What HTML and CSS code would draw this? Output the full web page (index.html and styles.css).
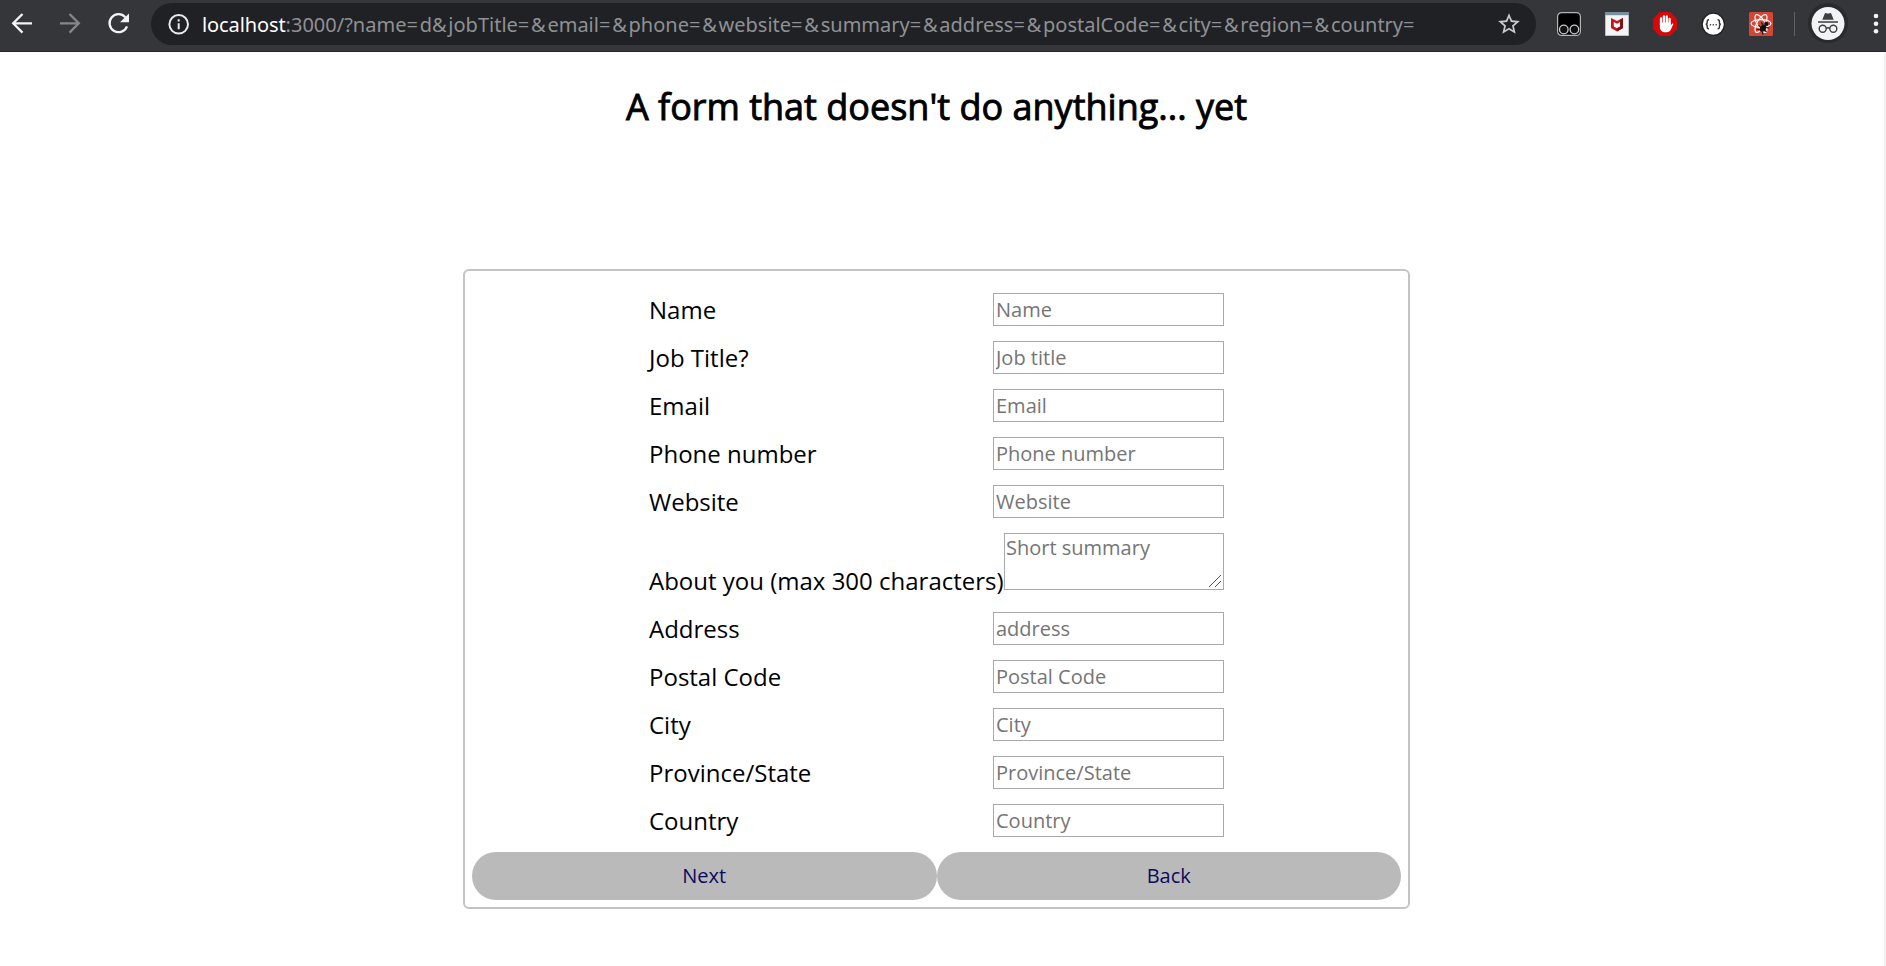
FILE: index.html
```html
<!DOCTYPE html>
<html lang="en">
<head>
<meta charset="utf-8">
<title>Form</title>
<link rel="stylesheet" href="styles.css">
</head>
<body>
<header class="toolbar">
  <svg class="nav" width="148" height="48" viewBox="0 0 148 48" fill="none" stroke="#f1f3f4" stroke-width="2.3">
    <path d="M32 23.3H13.5M22.5 14L13.2 23.3l9.3 9.3"/>
    <path stroke="#85878a" d="M60 23.3H78.5M69.5 14l9.3 9.3-9.3 9.3"/>
    <path d="M125.3 17.2A9 9 0 1 0 127 26.3"/>
    <path fill="#f1f3f4" stroke="none" d="M129 13.5V22.2H120z"/>
  </svg>
  <div class="omnibox">
    <svg width="22" height="22" viewBox="0 0 22 22" fill="none" stroke="#e8eaed" stroke-width="2">
      <circle cx="10.7" cy="11.3" r="9.3"/><path d="M10.7 10.3v6M10.7 6.3v2.2"/>
    </svg>
    <div class="url"><span class="host">localhost</span>:3000/?name<span class="sep">=</span>d<span class="sep">&amp;</span>jobTitle<span class="sep">=&amp;</span>email<span class="sep">=&amp;</span>phone<span class="sep">=&amp;</span>website<span class="sep">=&amp;</span>summary<span class="sep">=&amp;</span>address<span class="sep">=&amp;</span>postalCode<span class="sep">=&amp;</span>city<span class="sep">=&amp;</span>region<span class="sep">=&amp;</span>country<span class="sep">=</span></div>
    <svg class="star" width="26" height="26" viewBox="0 0 24 24"><path fill="#c8cacd" d="M22 9.24l-7.19-.62L12 2 9.19 8.63 2 9.24l5.46 4.73L5.82 21 12 17.27 18.18 21l-1.63-7.03L22 9.24zM12 15.4l-3.76 2.27 1-4.28-3.32-2.88 4.38-.38L12 6.1l1.71 4.04 4.38.38-3.32 2.88 1 4.28L12 15.4z"/></svg>
  </div>
  <div class="extensions">
    <svg width="24" height="24" viewBox="0 0 24 24"><rect x=".6" y=".6" width="22.8" height="22.8" rx="4" fill="#000" stroke="#b5b5b5" stroke-width="1.2"/><g fill="#111" stroke="#c9ccd0" stroke-width="1.3"><circle cx="6.8" cy="17.5" r="4.3"/><circle cx="17.4" cy="17.5" r="4.3"/></g></svg>
    <svg width="24" height="24" viewBox="0 0 24 24"><path fill="#f4f4f4" stroke="#c3cdd2" stroke-width=".8" d="M.4.4h23.2v23.2H.4z"/><path fill="#78909c" d="M0 0h24v3.2H0z"/><path fill="#c01818" d="M6 6l6 3 6-3v10l-6 3.4L6 16z"/><path fill="#f4f4f4" d="M8.8 10l3.2 1.7 3.2-1.7v4.6L12 16.3l-3.2-1.7z"/><path fill="#7d1017" d="M15.2 7.4L18 6v10l-6 3.4v-3.1l3.2-1.7z"/></svg>
    <svg width="24" height="24" viewBox="0 0 24 24"><path fill="#d90707" d="M7 0h10l7 7v10l-7 7H7l-7-7V7z"/><path fill="none" stroke="#fff" stroke-width="2.3" stroke-linecap="round" d="M8 13V6.5M10.9 12V4.3M13.8 12V4.3M16.6 14V6.8"/><path fill="#fff" d="M6.9 10.5h10.8v3.3l1.4-2c.7-.8 1.3-.3 1 .7l-2.2 5c-1 2-2.2 2.7-4.4 2.7H12c-3 0-5.1-2.3-5.1-5z"/></svg>
    <svg width="24" height="24" viewBox="0 0 24 24"><circle cx="12.3" cy="12.3" r="11.2" fill="#fff" stroke="#202124" stroke-width="1.4"/><path fill="none" stroke="#333" stroke-width="1.4" d="M8 7.8c-2 0-1.8 1-1.8 2.4 0 1.5-.5 2.1-1.5 2.1 1 0 1.5.6 1.5 2.1 0 1.4-.2 2.4 1.8 2.4M16.6 7.8c2 0 1.8 1 1.8 2.4 0 1.5.5 2.1 1.5 2.1-1 0-1.5.6-1.5 2.1 0 1.4.2 2.4-1.8 2.4"/><path fill="#444" d="M8.8 12h1.3v1.4H8.8zM11.7 12H13v1.4h-1.3zM14.6 12h1.3v1.4h-1.3z"/></svg>
    <svg width="24" height="24" viewBox="0 0 24 24"><rect width="24" height="24" rx="1.5" fill="#d44735"/><g fill="none" stroke="#fff" stroke-width="1.2"><ellipse cx="12" cy="11.5" rx="10" ry="3.9"/><ellipse cx="12" cy="11.5" rx="10" ry="3.9" transform="rotate(60 12 11.5)"/><ellipse cx="12" cy="11.5" rx="10" ry="3.9" transform="rotate(120 12 11.5)"/></g><g transform="rotate(38 14.8 15)"><ellipse cx="14.8" cy="16.5" rx="2.8" ry="4" fill="#171212"/><circle cx="14.8" cy="11" r="2.1" fill="#171212"/><path fill="none" stroke="#171212" stroke-width="1.1" d="M10 12.5l2.5 1.5M19.6 12.5L17 14M9.5 17h10.5M10.5 21.5l2.5-2M19 21.5l-2.5-2"/></g></svg>
  </div>
  <span class="divider"></span>
  <svg class="profile" width="42" height="42" viewBox="0 0 42 42"><circle cx="21" cy="21" r="20" fill="#292a2d"/><circle cx="21" cy="21.5" r="16.5" fill="#f1f3f4"/><g fill="#3c4043"><path d="M11 19.2h20v1.5H11zM15.3 17.8l2.5-6.2c.3-.6.8-.7 1.4-.4 1.2.5 2.4.5 3.6 0 .6-.3 1.1-.2 1.4.4l2.5 6.2z"/></g><g fill="none" stroke="#3c4043" stroke-width="1.4"><circle cx="15.7" cy="26.7" r="3.5"/><circle cx="26.3" cy="26.7" r="3.5"/><path d="M19.2 26.4q1.8-1.2 3.6 0"/></g></svg>
  <svg class="more" width="8" height="24" viewBox="0 0 8 24" fill="#f1f3f4"><circle cx="4" cy="4" r="2.3"/><circle cx="4" cy="11.7" r="2.3"/><circle cx="4" cy="19.3" r="2.3"/></svg>
</header>
<div class="viewport">
  <main class="page">
    <h1 class="title">A form that doesn't do anything... yet</h1>
    <form class="form">
      <div class="rows">
        <label class="row"><span class="label">Name</span><input class="field" placeholder="Name"></label>
        <label class="row"><span class="label">Job Title?</span><input class="field" placeholder="Job title"></label>
        <label class="row"><span class="label">Email</span><input class="field" placeholder="Email"></label>
        <label class="row"><span class="label">Phone number</span><input class="field" placeholder="Phone number"></label>
        <label class="row"><span class="label">Website</span><input class="field" placeholder="Website"></label>
        <label class="row row-summary"><span class="label">About you (max 300 characters)</span><span class="summary-box"><textarea class="summary" placeholder="Short summary"></textarea><svg class="grip" width="14" height="14" viewBox="0 0 14 14" stroke="#555" stroke-width="1"><path d="M1 13L13 1M7 13l6-6"/></svg></span></label>
        <label class="row"><span class="label">Address</span><input class="field" placeholder="address"></label>
        <label class="row"><span class="label">Postal Code</span><input class="field" placeholder="Postal Code"></label>
        <label class="row"><span class="label">City</span><input class="field" placeholder="City"></label>
        <label class="row"><span class="label">Province/State</span><input class="field" placeholder="Province/State"></label>
        <label class="row"><span class="label">Country</span><input class="field" placeholder="Country"></label>
      </div>
      <div class="actions"><button class="button" type="button">Next</button><button class="button" type="button">Back</button></div>
    </form>
  </main>
  <div class="scroll-edge"></div>
</div>
</body>
</html>
```

FILE: styles.css
```css
* { box-sizing: border-box; }
body { margin: 0; height: 966px; overflow: hidden; background: #fff; color: #000; font-family: "Open Sans", sans-serif; display: flex; flex-direction: column; }
.toolbar { display: flex; align-items: flex-start; height: 52px; flex: none; background: #35363a; border-bottom: 1px solid #252629; }
.toolbar svg { flex: none; display: block; }
.nav { margin-right: 3px; }
.omnibox { display: flex; align-items: center; width: 1385px; height: 42px; margin-top: 3px; padding: 0 14px 0 17px; border-radius: 21px; background: #202124; flex: none; }
.url { flex: 1; margin-left: 12px; padding-top: 1px; font: 20px/42px "Noto Sans", sans-serif; color: #8f9194; white-space: nowrap; }
.host { color: #fff; letter-spacing: -0.1px; }
.sep { letter-spacing: 1.75px; }
.extensions { display: flex; gap: 24px; margin: 12px 0 0 21px; }
.divider { width: 1px; height: 24px; margin: 12px 0 0 21px; background: #5f6164; flex: none; }
.profile { margin: 2px 0 0 12px; }
.more { margin: 12px 0 0 23px; }
.viewport { display: flex; flex: 1; justify-content: space-between; }
.page { width: 1873px; display: flex; flex-direction: column; align-items: center; }
.scroll-edge { width: 2px; background: #f1f1f1; }
.title { margin: 30px 0 0; font-size: 36px; line-height: 49px; font-weight: 400; -webkit-text-stroke: 0.9px #000; white-space: nowrap; }
.form { width: 947px; margin-top: 138px; padding: 22px 7px 7px; border: 2px solid #c4c4c4; border-radius: 6px; }
.rows { display: flex; flex-direction: column; gap: 15px; width: 575px; margin: 0 auto 15px 177px; }
.row { display: flex; justify-content: space-between; height: 33px; }
.row-summary { height: 64px; }
.label { font-size: 24px; line-height: 33px; white-space: nowrap; align-self: flex-end; }
.field, .summary { font: 20px "Open Sans", sans-serif; border: 1px solid #a9a9a9; border-radius: 0; background: #fff; outline: 0; }
.field { width: 231px; height: 33px; padding: 1px 2px; }
.summary-box { position: relative; flex: none; width: 220px; height: 57px; }
.summary { display: block; width: 100%; height: 100%; padding: 0 1px; overflow: hidden; resize: none; }
.grip { position: absolute; right: 2px; bottom: 2px; }
.field::placeholder, .summary::placeholder { color: #757575; }
.actions { display: flex; }
.button { flex: 1; height: 48px; padding: 0 0 2px; border: 0; border-radius: 24px; background: #bababa; color: #0b0b5e; font: 20px "Open Sans", sans-serif; }
```
